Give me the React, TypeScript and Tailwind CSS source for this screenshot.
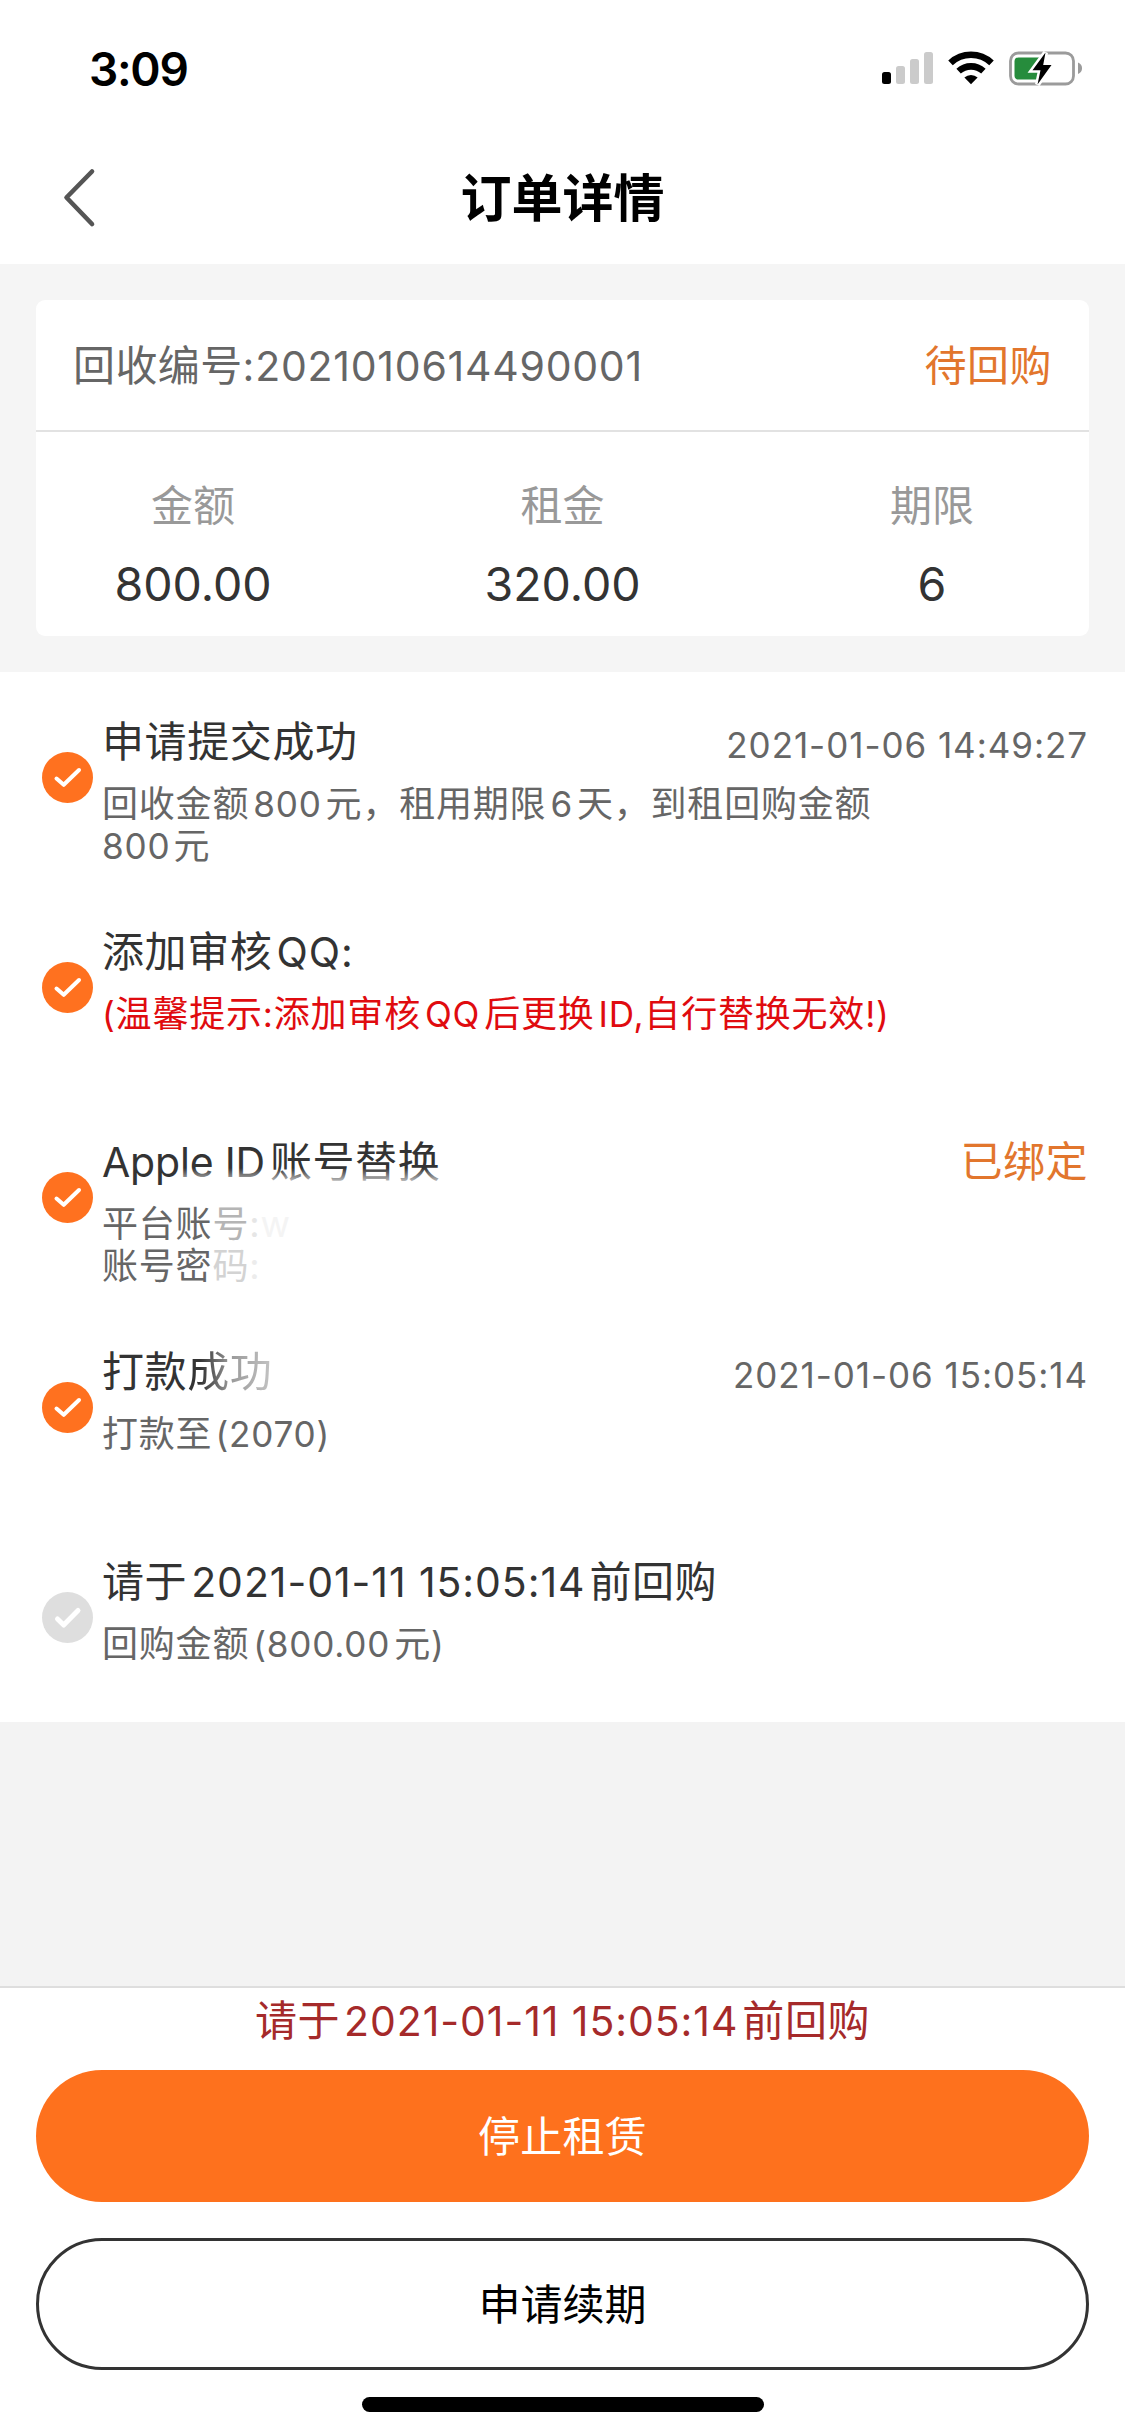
import React from "react";

type Kids = { children: React.ReactNode };

/** Latin / digit run set between Chinese characters. */
function N({ children, className = "mx-[4px]" }: Kids & { className?: string }) {
  return <span className={`text-[0.975em] tracking-[0.023em] ${className}`}>{children}</span>;
}

function CheckDot({ done }: { done: boolean }) {
  return (
    <svg viewBox="0 0 51 51" className="h-[51px] w-[51px] shrink-0">
      <circle cx="25.5" cy="25.5" r="25.5" fill={done ? "#ff711f" : "#dedede"} />
      <path
        d={done ? "M14.5 26.5L21.7 32.8L37 18" : "M15.5 27L21.7 33L36 18.5"}
        fill="none"
        stroke="#fff"
        strokeWidth={done ? 4 : 5}
        strokeLinecap="round"
        strokeLinejoin="round"
      />
    </svg>
  );
}

function Step({
  done = true,
  title,
  aside,
  children,
}: Kids & { done?: boolean; title: React.ReactNode; aside?: React.ReactNode }) {
  return (
    <li className="flex h-[210px] pr-[37px] pl-[42px]">
      <div className="flex w-[60px] items-center">
        <CheckDot done={done} />
      </div>
      <div className="min-w-0 flex-1 pt-[46px]">
        <div className="flex h-12 justify-between whitespace-nowrap">
          <h2 className="text-[42px] leading-[48px] tracking-[0.6px] text-[#333]">{title}</h2>
          {aside}
        </div>
        <div className="mt-[17px] text-[36px] leading-[42px] tracking-[0.8px] whitespace-nowrap text-[#666]">
          {children}
        </div>
      </div>
    </li>
  );
}

function Time({ children }: Kids) {
  return <time className="pt-[3px] text-[35px] leading-[48px] tracking-[0.95px] text-[#666]">{children}</time>;
}

function StatusIcons() {
  return (
    <svg viewBox="0 0 206 40" className="h-10 w-[206px]">
      <rect x="2" y="23" width="9" height="12" rx="2.5" fill="#000" />
      <rect x="16" y="17" width="9" height="18" rx="2.5" fill="#cbcbcb" />
      <rect x="30" y="10" width="9" height="25" rx="2.5" fill="#cbcbcb" />
      <rect x="44" y="3" width="9" height="32" rx="2.5" fill="#cbcbcb" />
      <g fill="none" stroke="#000" strokeWidth="6.6">
        <path d="M70.5 13.8A30 30 0 0 1 111.5 13.8" />
        <path d="M78.6 22.1A18.5 18.5 0 0 1 103.4 22.1" />
      </g>
      <path d="M91 35.2L84.4 28.6A9.5 9.5 0 0 1 97.6 28.6Z" fill="#000" />
      <rect x="130.5" y="4" width="63" height="31" rx="8" fill="none" stroke="#9b9b9b" strokeWidth="2.8" />
      <path d="M198 13.5Q202 15 202 19.3T198 25Z" fill="#9b9b9b" />
      <rect x="134.5" y="8.5" width="29" height="22" rx="4" fill="#268c3c" />
      <path
        d="M165.5 3.5L152.5 21.2H160.5L157.5 35.5L171.5 16H163.2Z"
        fill="#000"
        stroke="#fff"
        strokeWidth="5"
        paintOrder="stroke"
      />
    </svg>
  );
}

const figures = [
  ["金额", "800.00"],
  ["租金", "320.00"],
  ["期限", "6"],
];

export default function App() {
  return (
    <div className="flex h-[2436px] w-[1125px] flex-col bg-[#f3f3f3] font-['Inter','Noto_Sans_CJK_SC',sans-serif]">
      <header className="h-[264px] bg-white">
        <div className="flex h-[132px] justify-between pt-[49px] pr-[39px] pl-[89px]">
          <span className="text-[46px] leading-10 font-semibold tracking-[-1.3px] text-black">3:09</span>
          <StatusIcons />
        </div>
        <div className="grid h-[132px] grid-cols-[1fr_auto_1fr] items-center">
          <svg viewBox="0 0 34 60" className="ml-[62px] h-[60px] w-[34px]">
            <path
              d="M30 3.5L4.5 29.5L30 56"
              fill="none"
              stroke="#555"
              strokeWidth="4.6"
              strokeLinecap="round"
              strokeLinejoin="round"
            />
          </svg>
          <h1 className="pt-[2px] text-[51px] leading-[60px] font-bold text-black">订单详情</h1>
        </div>
      </header>

      <section className="bg-[#f5f5f5] px-9 py-9">
        <div className="h-[336px] rounded-[9px] bg-white">
          <div className="flex h-[132px] items-center justify-between border-b-2 border-[#e2e2e2] pt-[2px] pr-[37px] pl-[37px] text-[42px] leading-[48px]">
            <span className="tracking-[0.4px] text-[#666]">
              回收编号<span className="text-[41px] tracking-[0.75px]">:2021010614490001</span>
            </span>
            <span className="tracking-[0.5px] text-[#e2762d]">待回购</span>
          </div>
          <div className="flex justify-between px-[37px] pt-[50px]">
            {figures.map(([label, value]) => (
              <div key={label} className="w-[240px] text-center">
                <div className="text-[42px] leading-[48px] text-[#999]">{label}</div>
                <div className="mt-[26px] text-[46.5px] leading-[56px] text-[#333]">{value}</div>
              </div>
            ))}
          </div>
        </div>
      </section>

      <ul className="h-[1050px] bg-white">
        <Step title="申请提交成功" aside={<Time>2021-01-06 14:49:27</Time>}>
          回收金额<N>800</N>元，租用期限<N>6</N>天，到租回购金额
          <br />
          <N className="mr-[3px]">800</N>元
        </Step>
        <Step
          title={
            <>
              添加审核<N>QQ:</N>
            </>
          }
        >
          <span className="text-[#e00b0f]">
            <N className="">(</N>温馨提示<N className="">:</N>添加审核<N>QQ</N>后更换<N className="ml-[4px]">ID,</N>
            自行替换无效<N className="">!)</N>
          </span>
        </Step>
        <Step
          title={
            <span className="relative">
              <span className="text-[41px] tracking-[-0.2px]">Apple ID</span>
              <span className="ml-[5px]">账号替换</span>
              <span className="absolute top-[32px] right-0 h-[18px] w-[258px] bg-linear-to-b from-white/0 to-white/90" />
            </span>
          }
          aside={<span className="text-[42px] leading-[48px] tracking-[0.5px] text-[#e2762d]">已绑定</span>}
        >
          平台账<span className="text-[#b5b5b5]">号</span>
          <span className="text-[#e6e6e6]">:</span>
          <span className="text-[#f4f4f4]">w</span>
          <br />
          账号密<span className="text-[#d3d3d3]">码</span>
          <span className="text-[#ececec]">:</span>
        </Step>
        <Step
          title={
            <>
              打款
              <span className="bg-linear-to-r from-[#333] from-15% via-[#999] via-50% to-[#c4c4c4] bg-clip-text text-transparent">
                成功
              </span>
            </>
          }
          aside={<Time>2021-01-06 15:05:14</Time>}
        >
          打款至<N className="ml-[3px]">(2070)</N>
        </Step>
        <Step
          done={false}
          title={
            <>
              请于<N>2021-01-11 15:05:14</N>前回购
            </>
          }
        >
          回购金额<N>(800.00</N>元<N className="">)</N>
        </Step>
      </ul>

      <footer className="mt-auto flex h-[450px] flex-col items-center border-t-2 border-[#dedede] bg-white px-9 pt-[9px]">
        <p className="text-[42px] leading-[48px] tracking-[0.6px] text-[#a52a2a]">
          请于<N>2021-01-11 15:05:14</N>前回购
        </p>
        <button className="mt-[25px] h-[132px] w-full shrink-0 rounded-full bg-[#fe711d] text-[42px] tracking-[0.3px] text-white">
          停止租赁
        </button>
        <button className="mt-9 h-[132px] w-full shrink-0 rounded-full border-[3px] border-[#333] bg-white text-[42px] text-black">
          申请续期
        </button>
        <div className="mt-[27px] h-[15px] w-[402px] rounded-full bg-black" />
      </footer>
    </div>
  );
}
